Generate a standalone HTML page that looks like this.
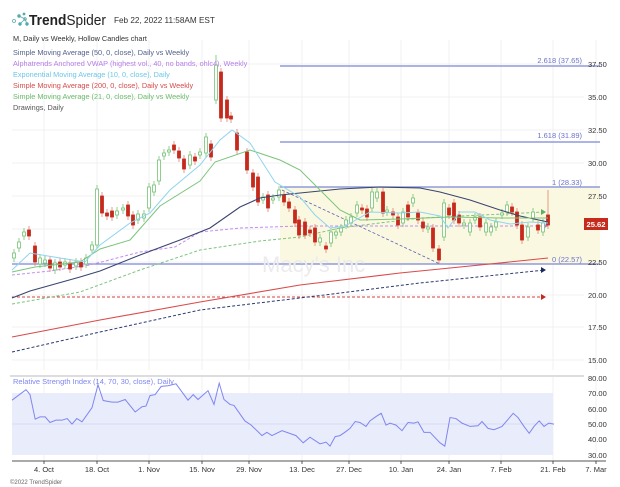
<!DOCTYPE html>
<html><head><meta charset="utf-8"><style>
html,body{margin:0;padding:0;background:#fff;width:620px;height:487px;overflow:hidden}
svg{display:block;font-family:"Liberation Sans",sans-serif}
</style></head><body>
<svg id="s" width="620" height="487" viewBox="0 0 620 487" xmlns="http://www.w3.org/2000/svg">
<g stroke="#f0f0f0" stroke-width="1">
<line x1="44" y1="40" x2="44" y2="370"/><line x1="97" y1="40" x2="97" y2="370"/><line x1="149" y1="40" x2="149" y2="370"/><line x1="202" y1="40" x2="202" y2="370"/><line x1="249" y1="40" x2="249" y2="370"/><line x1="302" y1="40" x2="302" y2="370"/><line x1="349" y1="40" x2="349" y2="370"/><line x1="401" y1="40" x2="401" y2="370"/><line x1="449" y1="40" x2="449" y2="370"/><line x1="501" y1="40" x2="501" y2="370"/><line x1="553" y1="40" x2="553" y2="370"/><line x1="596" y1="40" x2="596" y2="370"/>
<line x1="12" y1="64" x2="584" y2="64"/><line x1="12" y1="97" x2="584" y2="97"/><line x1="12" y1="130" x2="584" y2="130"/><line x1="12" y1="163" x2="584" y2="163"/><line x1="12" y1="196" x2="584" y2="196"/><line x1="12" y1="229" x2="584" y2="229"/><line x1="12" y1="262" x2="584" y2="262"/><line x1="12" y1="295" x2="584" y2="295"/><line x1="12" y1="327" x2="584" y2="327"/><line x1="12" y1="360" x2="584" y2="360"/>
<line x1="44" y1="376" x2="44" y2="461"/><line x1="97" y1="376" x2="97" y2="461"/><line x1="149" y1="376" x2="149" y2="461"/><line x1="202" y1="376" x2="202" y2="461"/><line x1="249" y1="376" x2="249" y2="461"/><line x1="302" y1="376" x2="302" y2="461"/><line x1="349" y1="376" x2="349" y2="461"/><line x1="401" y1="376" x2="401" y2="461"/><line x1="449" y1="376" x2="449" y2="461"/><line x1="501" y1="376" x2="501" y2="461"/><line x1="553" y1="376" x2="553" y2="461"/><line x1="596" y1="376" x2="596" y2="461"/>
</g>
<rect x="280" y="187" width="320" height="77" fill="#fbf8e2"/>
<g stroke="#7b86d6" stroke-width="1.2">
<line x1="280" y1="66" x2="600" y2="66"/><line x1="280" y1="142" x2="600" y2="142"/>
<line x1="280" y1="187" x2="600" y2="187"/><line x1="12" y1="264" x2="600" y2="264"/>
</g>
<g fill="#6a74c8" font-size="7.5" text-anchor="end">
<text x="582" y="63">2.618 (37.65)</text><text x="582" y="138">1.618 (31.89)</text>
<text x="582" y="185">1 (28.33)</text><text x="582" y="262">0 (22.57)</text>
</g>
<text x="262" y="272" font-size="22" fill="#ebebeb">Macy's Inc</text>
<polyline points="12,297 545,297" fill="none" stroke="#d04040" stroke-width="1" stroke-dasharray="3,2"/>
<path d="M541,294 l5,3 -5,3z" fill="#c62a1d"/>
<polyline points="12,352 100,332 200,310 300,298 420,283 545,270" fill="none" stroke="#2c3a70" stroke-width="1" stroke-dasharray="3,2"/>
<path d="M541,267 l5,3 -5,3z" fill="#1c2a60"/>
<polyline points="12,304 80,292 140,270 200,250 260,241 300,237 340,228 420,218 545,212" fill="none" stroke="#7cc47c" stroke-width="1" stroke-dasharray="3,2"/>
<path d="M541,209 l5,3 -5,3z" fill="#5fb05f"/>
<polyline points="12,275 50,271 90,265 140,252 175,247 200,232 240,228 300,226" fill="none" stroke="#c38cf0" stroke-width="1" stroke-dasharray="3,2"/>
<polyline points="300,226 548,226" fill="none" stroke="#c38cf0" stroke-width="1" stroke-dasharray="3,2"/>
<path d="M543,223 l5,3 -5,3z" fill="#b57de8"/>
<polyline points="12,337 100,320 200,302 300,285 400,273 480,265 548,258" fill="none" stroke="#d94a4a" stroke-width="1.1"/>
<polyline points="282,190 440,264" fill="none" stroke="#5a64b0" stroke-width="0.8" stroke-dasharray="3,2"/>
<g id="candles"></g>
<polyline points="12,298 30,291 80,277 100,271 140,255 180,240 210,228 240,207 260,198 280,195 300,193 340,189 380,187 420,188 440,192 470,200 500,210 520,216 548,222" fill="none" stroke="#3a4470" stroke-width="1.1"/>
<polyline points="12,272 35,267 80,262 100,249 130,240 160,206 200,181 215,162 250,150 280,160 300,170 320,190 340,210 360,220 400,219 450,217 500,218 548,218" fill="none" stroke="#7cc47c" stroke-width="1"/>
<polyline points="12,270 30,253 60,258 85,262 100,245 130,223 150,213 170,190 200,165 220,140 232,130 250,143 275,182 300,197 315,215 330,228 345,226 370,212 400,213 420,212 440,216 448,228 460,212 475,212 490,220 510,224 530,222 548,223" fill="none" stroke="#8fd4ee" stroke-width="1"/>
<g fill="#333" font-size="7.5">
<text x="588" y="67">37.50</text><text x="588" y="100">35.00</text><text x="588" y="133">32.50</text><text x="588" y="166">30.00</text><text x="588" y="199">27.50</text><text x="588" y="265">22.50</text><text x="588" y="298">20.00</text><text x="588" y="330">17.50</text><text x="588" y="363">15.00</text>
</g>
<rect x="584" y="218" width="24" height="12" fill="#c62a1d"/>
<text x="586.5" y="227" font-size="7.6" fill="#fff" font-weight="bold">25.62</text>
<line x1="10" y1="376" x2="584" y2="376" stroke="#ddd" stroke-width="2"/>
<rect x="12" y="393" width="541" height="62" fill="#e9ecfa"/>
<line x1="12" y1="424" x2="553" y2="424" stroke="#d8dcf3"/>
<polyline transform="translate(0,370) scale(0.4,0.328)" vector-effect="non-scaling-stroke" fill="none" stroke="#7f86f0" stroke-width="1" points="30,92 65,60 75,75 88,150 100,143 113,143 125,160 140,153 155,153 168,148 180,165 192,148 205,158 230,115 245,45 258,93 280,98 295,98 313,90 338,128 355,112 365,110 375,78 388,75 403,50 420,48 440,42 470,92 483,75 495,90 520,63 535,105 548,40 560,90 575,105 585,108 612,155 628,168 655,200 667,190 680,200 705,185 740,200 758,222 775,205 800,225 815,220 825,232 838,203 850,200 862,190 875,178 888,157 900,160 915,172 925,155 940,142 953,132 965,168 975,162 990,168 1005,185 1020,160 1035,162 1045,158 1060,190 1075,190 1100,222 1112,232 1125,145 1140,148 1155,162 1175,172 1195,170 1205,157 1220,178 1235,182 1255,172 1283,132 1295,145 1310,172 1323,193 1335,172 1348,155 1360,172 1372,162 1385,165"/>
<text x="13" y="384" font-size="7.5" fill="#7f86f0">Relative Strength Index (14, 70, 30, close), Daily</text>
<g fill="#333" font-size="7.5">
<text x="588" y="381">80.00</text><text x="588" y="396">70.00</text><text x="588" y="412">60.00</text><text x="588" y="427">50.00</text><text x="588" y="442">40.00</text><text x="588" y="458">30.00</text>
</g>
<line x1="12" y1="461" x2="606" y2="461" stroke="#555"/>
<g fill="#333" font-size="7.5" text-anchor="middle">
<text x="44" y="472">4. Oct</text><text x="97" y="472">18. Oct</text><text x="149" y="472">1. Nov</text><text x="202" y="472">15. Nov</text><text x="249" y="472">29. Nov</text><text x="302" y="472">13. Dec</text><text x="349" y="472">27. Dec</text><text x="401" y="472">10. Jan</text><text x="449" y="472">24. Jan</text><text x="501" y="472">7. Feb</text><text x="553" y="472">21. Feb</text><text x="596" y="472">7. Mar</text>
</g>
<g stroke="#333" stroke-width="0.8"><line x1="44" y1="461" x2="44" y2="464"/><line x1="97" y1="461" x2="97" y2="464"/><line x1="149" y1="461" x2="149" y2="464"/><line x1="202" y1="461" x2="202" y2="464"/><line x1="249" y1="461" x2="249" y2="464"/><line x1="302" y1="461" x2="302" y2="464"/><line x1="349" y1="461" x2="349" y2="464"/><line x1="401" y1="461" x2="401" y2="464"/><line x1="449" y1="461" x2="449" y2="464"/><line x1="501" y1="461" x2="501" y2="464"/><line x1="553" y1="461" x2="553" y2="464"/><line x1="596" y1="461" x2="596" y2="464"/></g>
<text x="10" y="484" font-size="6" fill="#666">©2022 TrendSpider</text>
<g fill="#5aa" stroke="#5aa" stroke-width="0.8">
<circle cx="14" cy="21" r="1.5" fill="none"/><circle cx="19" cy="16" r="1.3"/><circle cx="20" cy="24" r="1.3"/><circle cx="25" cy="19" r="1.3" fill="none"/><circle cx="27" cy="24" r="1.3"/><circle cx="24" cy="14" r="1"/>
<line x1="19" y1="16" x2="25" y2="19"/><line x1="20" y1="24" x2="25" y2="19"/><line x1="25" y1="19" x2="27" y2="24"/>
</g>
<text x="29" y="25" font-size="15" fill="#222" textLength="77" lengthAdjust="spacingAndGlyphs"><tspan font-weight="bold">Trend</tspan><tspan>Spider</tspan></text>
<text x="114" y="23" font-size="8.2" fill="#333">Feb 22, 2022 11:58AM EST</text>
<g font-size="7.3">
<text x="13" y="41" fill="#333">M, Daily vs Weekly, Hollow Candles chart</text>
<text x="13" y="55" fill="#55608a">Simple Moving Average (50, 0, close), Daily vs Weekly</text>
<text x="13" y="66" fill="#b77ee8">Alphatrends Anchored VWAP (highest vol., 40, no bands, ohlc4), Weekly</text>
<text x="13" y="77" fill="#6cc7e6">Exponential Moving Average (10, 0, close), Daily</text>
<text x="13" y="88" fill="#d54a4a">Simple Moving Average (200, 0, close), Daily vs Weekly</text>
<text x="13" y="99" fill="#6cbc6c">Simple Moving Average (21, 0, close), Daily vs Weekly</text>
<text x="13" y="110" fill="#555">Drawings, Daily</text>
</g>
</svg>
<script>
var C=[[14,253,258,'g'],[19,242,248,'g'],[24,232,236,'g'],[29,230,236,'r'],[35,246,262,'r'],[40,258,264,'g'],[45,260,263,'g'],[50,260,268,'r'],[55,263,270,'g'],[60,262,267,'r'],[65,262,265,'g'],[70,263,269,'r'],[76,262,266,'g'],[81,262,267,'r'],[86,258,264,'g'],[92,245,250,'g'],[97,189,245,'g'],[102,196,213,'r'],[107,213,216,'r'],[112,211,217,'r'],[117,211,215,'g'],[123,208,210,'g'],[128,205,216,'r'],[133,215,225,'r'],[138,214,220,'g'],[144,214,218,'g'],[149,187,208,'g'],[154,185,192,'g'],[159,160,181,'g'],[164,153,156,'g'],[169,150,152,'g'],[174,145,150,'r'],[179,151,158,'r'],[184,159,169,'r'],[190,155,165,'g'],[195,157,161,'r'],[200,152,155,'g'],[206,137,153,'g'],[211,144,157,'r'],[216,65,100,'g'],[221,72,118,'r'],[227,100,118,'r'],[231,116,119,'r'],[237,133,150,'r'],[247,152,170,'r'],[253,173,187,'r'],[258,177,202,'r'],[263,197,200,'g'],[268,195,208,'r'],[273,198,200,'g'],[279,190,197,'g'],[284,195,202,'r'],[289,202,208,'r'],[295,210,223,'r'],[299,220,235,'r'],[305,222,235,'r'],[310,230,233,'r'],[315,228,242,'r'],[320,238,242,'g'],[326,246,249,'r'],[331,232,243,'g'],[336,232,235,'g'],[341,228,232,'g'],[346,220,225,'g'],[351,217,223,'g'],[357,205,213,'g'],[362,208,210,'r'],[367,209,217,'r'],[372,192,208,'g'],[377,192,198,'g'],[383,192,213,'r'],[387,210,212,'g'],[393,212,215,'r'],[398,217,225,'r'],[403,212,223,'g'],[408,205,217,'r'],[413,198,203,'g'],[418,213,220,'r'],[423,222,228,'r'],[428,227,229,'g'],[433,228,248,'r'],[439,249,260,'r'],[444,203,237,'g'],[449,208,215,'r'],[454,203,220,'r'],[459,215,223,'r'],[464,223,225,'g'],[470,223,232,'g'],[475,217,220,'g'],[480,217,227,'r'],[486,223,232,'g'],[491,227,232,'g'],[496,222,227,'g'],[502,213,215,'g'],[507,205,212,'g'],[512,207,212,'r'],[517,212,225,'r'],[522,225,240,'r'],[528,227,237,'g'],[533,212,218,'g'],[538,225,230,'r'],[543,223,232,'g'],[548,215,225,'r']];
var h='';C.forEach(function(c){var x=c[0],t=c[1],b=c[2],g=c[3]=='g';var col=g?'#74c274':'#c62a1d';var hi=t-4,lo=b+4;if(x==548)hi=190;if(x==216)hi=55;
h+='<line x1="'+x+'" y1="'+hi+'" x2="'+x+'" y2="'+lo+'" stroke="'+(g?'#74c274':'#e08070')+'" stroke-width="0.8"/>';
h+='<rect x="'+(x-1.5)+'" y="'+t+'" width="3" height="'+Math.max(1.5,b-t)+'" fill="'+(g?'#fff':col)+'" stroke="'+col+'" stroke-width="0.8"/>';});
document.getElementById('candles').innerHTML=h;
</script>
</body></html>
